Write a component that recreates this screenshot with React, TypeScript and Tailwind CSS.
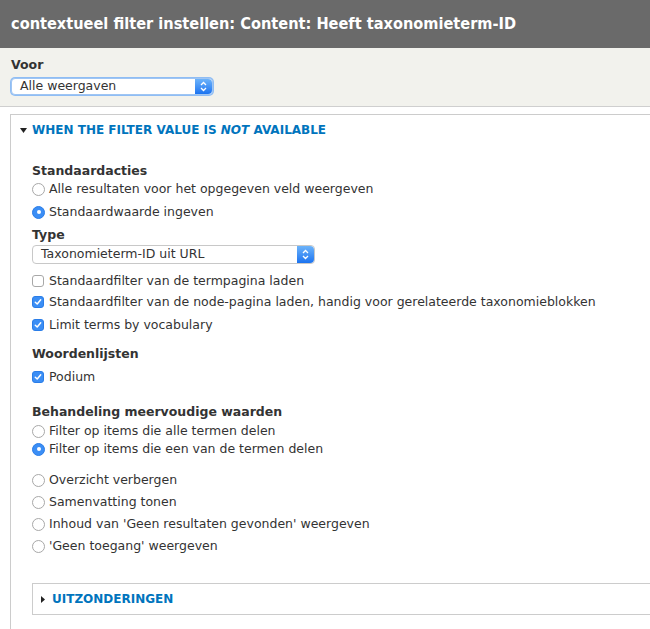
import React from "react";

function Radio({ checked }: { checked?: boolean }) {
  return checked ? (
    <span className="inline-flex h-[13px] w-[13px] shrink-0 items-center justify-center rounded-full bg-[#3b8ef5] border border-[#2a7de8]">
      <span className="h-[4px] w-[4px] rounded-full bg-white" />
    </span>
  ) : (
    <span className="inline-block h-[13px] w-[13px] shrink-0 rounded-full border border-[#a8a8a8] bg-white" />
  );
}

function Check({ checked }: { checked?: boolean }) {
  return checked ? (
    <span className="inline-flex h-[12px] w-[12px] shrink-0 items-center justify-center rounded-[3px] bg-[#3b8ef5] border border-[#2a7de8]">
      <svg width="8" height="8" viewBox="0 0 8 8">
        <path d="M1.3 4.2 L3.2 6 L6.7 1.8" stroke="white" strokeWidth="1.5" fill="none" strokeLinecap="round" strokeLinejoin="round" />
      </svg>
    </span>
  ) : (
    <span className="inline-block h-[12px] w-[12px] shrink-0 rounded-[3px] border border-[#a8a8a8] bg-white" />
  );
}

function Arrows() {
  return (
    <span className="flex h-full w-[17px] items-center justify-center rounded-r-[4px] bg-gradient-to-b from-[#6cb3fa] to-[#1a73f0]">
      <svg width="7" height="11" viewBox="0 0 7 11">
        <path d="M1 4 L3.5 1.5 L6 4 M1 7 L3.5 9.5 L6 7" stroke="white" strokeWidth="1.3" fill="none" />
      </svg>
    </span>
  );
}

function Row({ mt, children }: { mt: string; children: React.ReactNode }) {
  return <div className={`flex h-[16px] items-center gap-[4px] ${mt}`}>{children}</div>;
}

export default function App() {
  return (
    <div className="w-[650px] h-[629px] overflow-hidden bg-white text-[12.5px] text-[#333] font-['DejaVu_Sans',Verdana,sans-serif]">
      <div className="flex h-[48px] items-center bg-[#6a6a6a] px-[11px]">
        <h1 className="text-[16.2px] font-bold text-white leading-none font-['DejaVu_Sans_Condensed','DejaVu_Sans',sans-serif] [font-stretch:condensed]">
          contextueel filter instellen: Content: Heeft taxonomieterm-ID
        </h1>
      </div>
      <div className="h-[59px] border-b border-[#cfcfcf] bg-[#f2f2ed] px-[11px] pt-[9px]">
        <div className="h-[16px] font-bold leading-[16px]">Voor</div>
        <div className="mt-[4px] ml-[-1px] w-[204px] rounded-[5px] p-[1px] bg-[#8fbdf4]">
          <div className="flex h-[17px] items-center justify-between rounded-[4px] bg-white pl-[8px] border border-[#9fc5f3]">
            <span className="text-[12.5px] leading-none">Alle weergaven</span>
            <Arrows />
          </div>
        </div>
      </div>
      <div className="ml-[10px] mt-[7px] w-[700px] h-[600px] border border-[#cccccc] pl-[21px]">
        <div className="mt-[7px] flex h-[16px] items-center ml-[-12px]">
          <svg width="7" height="5" viewBox="0 0 7 5" className="mr-[5px]">
            <path d="M0 0 L7 0 L3.5 5 Z" fill="#222" />
          </svg>
          <span className="font-bold text-[#0074bd] text-[12px]">
            WHEN THE FILTER VALUE IS <i>NOT</i> AVAILABLE
          </span>
        </div>
        <Row mt="mt-[25px]"><span className="font-bold">Standaardacties</span></Row>
        <Row mt="mt-[2px]"><Radio /><span>Alle resultaten voor het opgegeven veld weergeven</span></Row>
        <Row mt="mt-[7px]"><Radio checked /><span>Standaardwaarde ingeven</span></Row>
        <Row mt="mt-[7px]"><span className="font-bold">Type</span></Row>
        <div className="mt-[2px] flex h-[19px] w-[283px] items-center justify-between rounded-[4px] border border-[#c8c8c8] bg-white pl-[8px]">
          <span className="text-[12.5px] leading-none">Taxonomieterm-ID uit URL</span>
          <Arrows />
        </div>
        <Row mt="mt-[9px]"><Check /><span className="ml-[1px]">Standaardfilter van de termpagina laden</span></Row>
        <Row mt="mt-[5px]"><Check checked /><span className="ml-[1px]">Standaardfilter van de node-pagina laden, handig voor gerelateerde taxonomieblokken</span></Row>
        <Row mt="mt-[7px]"><Check checked /><span className="ml-[1px]">Limit terms by vocabulary</span></Row>
        <Row mt="mt-[13px]"><span className="font-bold">Woordenlijsten</span></Row>
        <Row mt="mt-[7px]"><Check checked /><span className="ml-[1px]">Podium</span></Row>
        <Row mt="mt-[19px]"><span className="font-bold">Behandeling meervoudige waarden</span></Row>
        <Row mt="mt-[3px]"><Radio /><span>Filter op items die alle termen delen</span></Row>
        <Row mt="mt-[2px]"><Radio checked /><span>Filter op items die een van de termen delen</span></Row>
        <Row mt="mt-[15px]"><Radio /><span>Overzicht verbergen</span></Row>
        <Row mt="mt-[6px]"><Radio /><span>Samenvatting tonen</span></Row>
        <Row mt="mt-[6px]"><Radio /><span>Inhoud van 'Geen resultaten gevonden' weergeven</span></Row>
        <Row mt="mt-[6px]"><Radio /><span>'Geen toegang' weergeven</span></Row>
        <div className="mt-[29px] flex h-[32px] w-[700px] items-center border border-[#cccccc] pl-[8px]">
          <svg width="4" height="7" viewBox="0 0 4 7" className="mr-[7px]">
            <path d="M0 0 L4 3.5 L0 7 Z" fill="#222" />
          </svg>
          <span className="font-bold text-[#0074bd] text-[12px]">UITZONDERINGEN</span>
        </div>
      </div>
    </div>
  );
}
